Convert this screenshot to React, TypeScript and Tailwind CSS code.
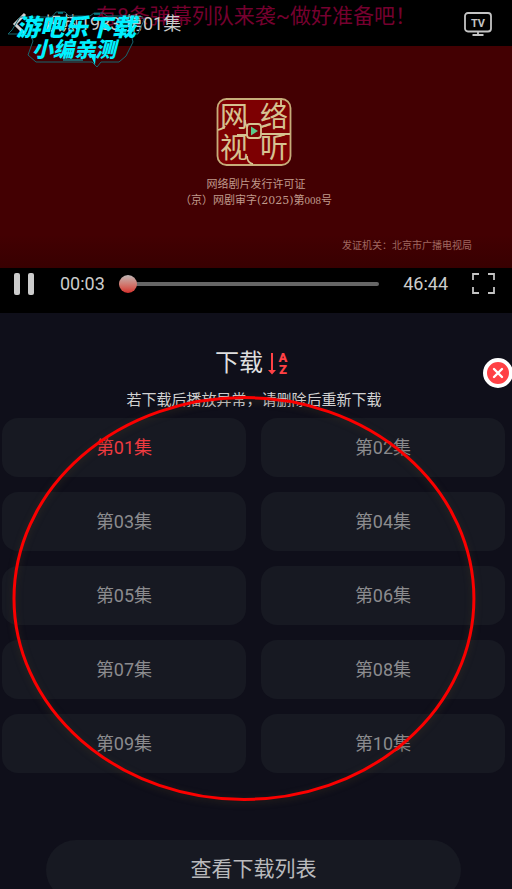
const episodes = [
  "第01集",
  "第02集",
  "第03集",
  "第04集",
  "第05集",
  "第06集",
  "第07集",
  "第08集",
  "第09集",
  "第10集",
];

const Watermark = () => (
  <div className="pointer-events-none absolute left-2 top-2.5 w-34 pt-0.5 font-black italic text-[#00f0ff]">
    <svg
      className="absolute left-0 top-0 h-15 w-36"
      viewBox="0 0 144 60"
      fill="none"
      stroke="#17666f"
    >
      <path d="M12 7h32l4-5h9l4 4h21l4-3h9l4 3h34l3 4-6 14h-7l2 8-7 14-7 6H93l-4 5-5-5H28l-8-7 5-14-3-7H0l4-4z" />
      <path d="M50 3h5M86 4h6M55 50h20" stroke="#00c4d0" />
      <path d="M82 44h6l-1 11z" fill="#00f0ff" stroke="none" />
    </svg>
    <div className="relative pl-2 text-2xl leading-8 whitespace-nowrap">
      游吧乐下载
    </div>
    <div className="relative -mt-1 pl-6 text-[21px] leading-5 whitespace-nowrap">
      小编亲测
    </div>
  </div>
);

const CastIcon = () => (
  <svg className="h-6 w-7" viewBox="0 0 28 24" fill="none" stroke="#c4c4c4">
    <rect x="1" y="1" width="26" height="18.5" rx="3" strokeWidth="1.8" />
    <path d="M14 20v3M8.5 23h11" strokeWidth="1.8" />
    <text
      x="14"
      y="14.5"
      textAnchor="middle"
      fill="#c4c4c4"
      stroke="none"
      fontSize="11"
      fontWeight="700"
    >
      TV
    </text>
  </svg>
);

const Seal = () => (
  <svg className="mr-1 h-17 w-19" viewBox="0 0 76 68">
    <rect
      x="1.5"
      y="1"
      width="73"
      height="66"
      rx="9"
      fill="#7d0002"
      stroke="#c6ad7a"
      strokeWidth="1.8"
    />
    <g fill="#d6c291" fontSize="28" textAnchor="middle">
      <text x="18" y="29">网</text>
      <text x="58" y="29">络</text>
      <text x="18" y="60">视</text>
      <text x="58" y="60">听</text>
    </g>
    <g fill="none" stroke="#d6c291" strokeWidth="1.8">
      <rect x="31" y="26" width="14" height="14" rx="3" fill="#7d0002" />
      <path d="M2 32c4-1 6-2 7-4M29 22c0 4 1 6 3 7M45 36h29M65 2v5M31 37H21M31 58c0 5 2 7 6 8" />
    </g>
    <path d="M35 28.500l7 4.500-7 4.500z" fill="#5cc98c" />
  </svg>
);

const SortIcon = () => (
  <svg className="h-7 w-6" viewBox="0 0 24 28" fill="#ff4145">
    <path d="M4 4h2v17h3l-4 4.500L1 21h3z" />
    <text x="16" y="12.5" textAnchor="middle" fontSize="13" fontWeight="900">
      A
    </text>
    <text x="16" y="24.5" textAnchor="middle" fontSize="13" fontWeight="900">
      Z
    </text>
  </svg>
);

const Player = () => (
  <section className="relative bg-black">
    <header className="relative flex h-[46px] items-center overflow-hidden pt-0.5 pr-5 pl-3">
      <p className="absolute left-24 top-0 text-[21px] leading-8 whitespace-nowrap text-[#75002f]">
        有8条弹幕列队来袭~做好准备吧！
      </p>
      <button type="button" aria-label="返回" className="relative">
        <svg
          className="h-6 w-4"
          viewBox="0 0 16 24"
          fill="none"
          stroke="#d0d0d0"
          strokeWidth="3"
        >
          <path d="M13 2L3 12l10 10" />
        </svg>
      </button>
      <h1 className="relative ml-4 flex-1 text-lg text-[#cccccc]">
        炽热1983 第01集
      </h1>
      <button type="button" aria-label="投屏" className="relative">
        <CastIcon />
      </button>
    </header>
    <Watermark />

    <div className="flex aspect-[512/222] w-full flex-col items-center bg-linear-to-b from-[#430002] from-85% to-[#380001] pt-13 font-['Liberation_Serif','Noto_Sans_CJK_SC',serif] text-[#c09a8c]">
      <Seal />
      <p className="mt-2.5 text-[11px] leading-4">网络剧片发行许可证</p>
      <p className="text-[11px] leading-4">
        （京）网剧审字
        <span className="font-['DejaVu_Serif',serif]">(2025)</span>
        第008号
      </p>
      <p className="mt-auto mr-10 mb-3.5 self-end text-[10px] leading-4 text-[#a06860]">
        发证机关：北京市广播电视局
      </p>
    </div>

    <div className="flex h-[45px] items-center pr-4 pb-3.5 pl-3.5 text-lg text-[#cccccc]">
      <button type="button" aria-label="暂停" className="flex gap-2">
        <span className="h-[22px] w-[6px] rounded-xs bg-[#cccccc]" />
        <span className="h-[22px] w-[6px] rounded-xs bg-[#cccccc]" />
      </button>
      <span className="ml-6.5">00:03</span>
      <input
        type="range"
        aria-label="播放进度"
        min={0}
        max={2804}
        defaultValue={3}
        className="mr-6 ml-3.5 h-5 min-w-0 flex-1 appearance-none bg-transparent [&::-webkit-slider-runnable-track]:h-1 [&::-webkit-slider-runnable-track]:rounded-full [&::-webkit-slider-runnable-track]:bg-[#666666] [&::-webkit-slider-thumb]:-mt-[7px] [&::-webkit-slider-thumb]:size-[18px] [&::-webkit-slider-thumb]:appearance-none [&::-webkit-slider-thumb]:rounded-full [&::-webkit-slider-thumb]:bg-linear-to-b [&::-webkit-slider-thumb]:from-[#bdb5b5] [&::-webkit-slider-thumb]:to-[#d42b2b]"
      />
      <span>46:44</span>
      <button type="button" aria-label="全屏" className="ml-6">
        <svg
          className="size-6"
          viewBox="0 0 24 24"
          fill="none"
          stroke="#c4c4c4"
          strokeWidth="1.8"
        >
          <path d="M1 8V2h6M16 2h6v6M22 15v6h-6M7 21H1v-6" />
        </svg>
      </button>
    </div>
  </section>
);

const DownloadPanel = () => (
  <section className="relative flex-1 overflow-hidden bg-[#0f0f1a] pt-8">
    <div className="flex items-center justify-center gap-1 pr-1.5">
      <h2 className="text-2xl leading-9 text-[#dedede]">下载</h2>
      <button type="button" aria-label="排序">
        <SortIcon />
      </button>
    </div>
    <button
      type="button"
      aria-label="关闭"
      className="absolute -right-px top-[45px] flex size-[30px] items-center justify-center rounded-full border-4 border-white bg-[#ff4045]"
    >
      <svg
        className="size-3"
        viewBox="0 0 12 12"
        stroke="#fff"
        strokeWidth="2.4"
        strokeLinecap="round"
      >
        <path d="M2 2l8 8M10 2l-8 8" />
      </svg>
    </button>
    <p className="mt-[7px] pr-1 text-center text-[15px] leading-6 text-[#d2d2d2]">
      若下载后播放异常，请删除后重新下载
    </p>

    <div className="relative mt-1.5 pr-[7px] pl-0.5">
      <ul className="grid grid-cols-2 gap-[15px]">
        {episodes.map((name, i) => (
          <li key={name}>
            <button
              type="button"
              className={`h-[59px] w-full rounded-2xl bg-[#171922] text-lg ${
                i === 0 ? "text-[#ee3b40]" : "text-[#8b8b8e]"
              }`}
            >
              {name}
            </button>
          </li>
        ))}
      </ul>
      <svg
        className="pointer-events-none absolute -top-[22px] left-[11px] h-[406px] w-[91%] drop-shadow-[0_2px_3px_rgba(60,50,30,0.6)]"
        viewBox="0 0 466 406"
        preserveAspectRatio="none"
        fill="none"
        stroke="#fb0000"
        strokeWidth="3"
      >
        <ellipse cx="233" cy="202.5" rx="230" ry="201" />
      </svg>
    </div>

    <div className="mt-[67px] pr-[51px] pl-[46px]">
      <button
        type="button"
        className="h-[60px] w-full rounded-full bg-[#171922] text-[21px] text-[#b9b9bc]"
      >
        查看下载列表
      </button>
    </div>
  </section>
);

export default function App() {
  return (
    <main className="flex h-screen flex-col overflow-hidden bg-[#0f0f1a] font-[Roboto,'Noto_Sans_CJK_SC',sans-serif]">
      <Player />
      <DownloadPanel />
    </main>
  );
}
